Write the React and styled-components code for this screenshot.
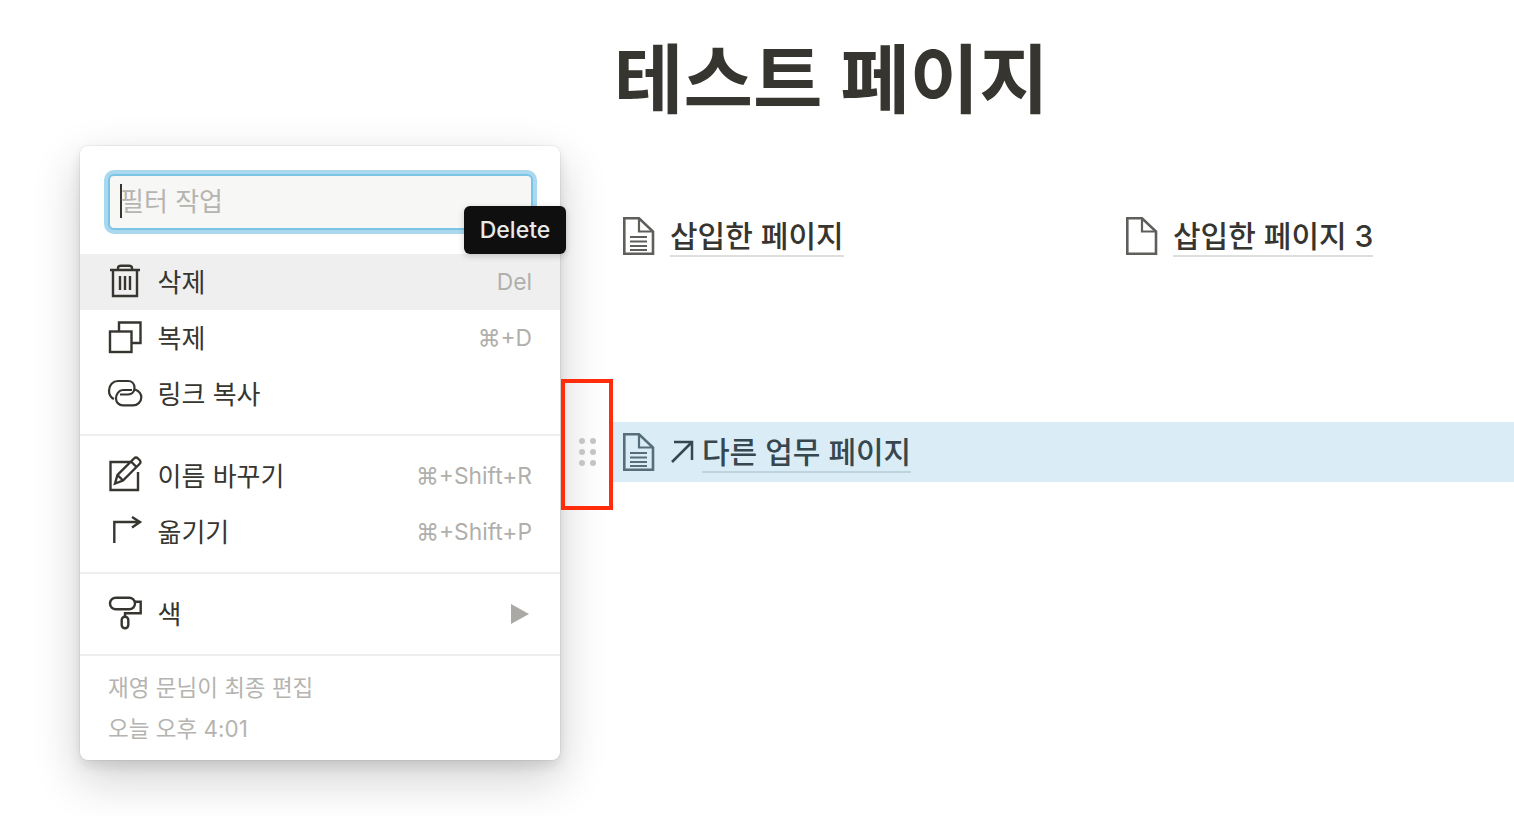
import styled, { createGlobalStyle } from "styled-components";

const Global = createGlobalStyle`
  html, body {
    margin: 0;
    padding: 0;
    background: #fff;
    font-family: Inter, "Noto Sans CJK KR", sans-serif;
  }
`;

const Page = styled.div`
  position: relative;
  width: 1514px;
  height: 816px;
  overflow: hidden;
  padding-left: 613px;
  box-sizing: border-box;
  background: #fff;
`;

const Title = styled.h1`
  margin: 0 0 52px;
  padding-left: 1px;
  height: 154px;
  line-height: 160px;
  font-size: 75.5px;
  font-weight: 700;
  color: #37352f;
  white-space: nowrap;
`;

const LinkGrid = styled.div`
  display: grid;
  grid-template-columns: 503px 1fr;
  margin-bottom: 156px;
`;

const Block = styled.div`
  display: flex;
  align-items: center;
  height: 60px;
  padding-left: 9px;
  background: ${(p) => (p.$selected ? "#daedf6" : "transparent")};
  color: ${(p) => (p.$selected ? "#37474f" : "#37352f")};
`;

const DocIcon = styled.svg`
  width: 33px;
  height: 40px;
  margin-right: 15px;
  flex: none;
  color: ${(p) => (p.$selected ? "#566e79" : "#5f5e5a")};
`;

const ArrowIcon = styled.svg`
  width: 26px;
  height: 26px;
  margin-right: 6px;
  flex: none;
`;

const LinkText = styled.span`
  font-size: 30px;
  line-height: 34px;
  padding: 4px 0 2px;
  font-weight: 500;
  white-space: nowrap;
  border-bottom: 2px solid ${(p) => (p.$selected ? "#bdd3de" : "#dededd")};
`;

const Menu = styled.div`
  position: absolute;
  left: 80px;
  top: 146px;
  width: 480px;
  height: 614px;
  box-sizing: border-box;
  padding-top: 28px;
  background: #fff;
  border-radius: 8px;
  box-shadow: 0 0 0 1px rgba(15, 15, 15, 0.05), 0 6px 12px rgba(15, 15, 15, 0.1),
    0 18px 48px rgba(15, 15, 15, 0.2);
`;

const FilterBox = styled.div`
  display: flex;
  align-items: center;
  box-sizing: border-box;
  height: 56px;
  margin: 0 27px 24px 28px;
  padding: 0 0 6px 10px;
  background: #f7f7f6;
  border: 2px solid #7cc4e6;
  border-radius: 6px;
  box-shadow: 0 0 0 4px #a9d8ef;
  font-size: 26px;
  color: #b5b4b0;
`;

const Caret = styled.span`
  width: 2px;
  height: 34px;
  margin: 4px -2px 0 0;
  background: #37352f;
  flex: none;
`;

const Tooltip = styled.div`
  position: absolute;
  left: 384px;
  top: 60px;
  width: 102px;
  height: 48px;
  display: flex;
  align-items: center;
  justify-content: center;
  background: #0f0f0f;
  color: #e9e9e8;
  border-radius: 6px;
  font-size: 23px;
  font-weight: 500;
  box-shadow: 0 2px 6px rgba(15, 15, 15, 0.2);
`;

const Row = styled.div`
  display: flex;
  align-items: center;
  height: 56px;
  padding: 0 28px;
  background: ${(p) => (p.$active ? "#efefef" : "transparent")};
  color: #37352f;
`;

const RowIcon = styled.svg`
  width: 36px;
  height: 36px;
  margin-right: 13.5px;
  flex: none;
  overflow: visible;
  color: #37352f;
`;

const RowLabel = styled.span`
  flex: 1;
  padding-bottom: 4px;
  font-size: 26px;
  white-space: nowrap;
`;

const Shortcut = styled.span`
  padding-bottom: 2px;
  font-size: 22.8px;
  color: #b0afac;
  white-space: nowrap;
`;

const Divider = styled.div`
  height: 2px;
  background: #eeeeee;
  margin: ${(p) => p.$top}px 0 ${(p) => p.$bottom}px;
`;

const Triangle = styled.span`
  width: 0;
  height: 0;
  margin-right: 3px;
  border-left: 18px solid #aaa9a6;
  border-top: 10px solid transparent;
  border-bottom: 10px solid transparent;
`;

const Footer = styled.div`
  padding-left: 28px;
  font-size: 22.5px;
  line-height: 41px;
  color: #b5b4b0;
  white-space: nowrap;
`;

const HandleFrame = styled.div`
  position: absolute;
  left: 561px;
  top: 379px;
  width: 52px;
  height: 131px;
  box-sizing: border-box;
  border: 4px solid #ff2d0a;
  display: flex;
  align-items: flex-start;
  justify-content: center;
  padding-top: 55px;
`;

const Dots = styled.div`
  display: grid;
  grid-template-columns: repeat(2, 6px);
  grid-auto-rows: 6px;
  gap: 5px;
`;

const Dot = styled.span`
  border-radius: 50%;
  background: #c4c4c2;
`;

const Doc = ({ lines, selected }) => (
  <DocIcon viewBox="0 0 33 40" fill="none" stroke="currentColor" strokeWidth="2.6" $selected={selected}>
    <path d="M2.3 2.3H17L31 15.5V37.7H2.3Z" />
    <path d="M17 2.3V15.5H31" strokeWidth="2.2" />
    {lines && <path d="M8 21H25M8 25.5H25M8 30H25M8 34H25" strokeWidth="2" />}
  </DocIcon>
);

const iconProps = { viewBox: "0 0 36 36", fill: "none", stroke: "currentColor", strokeWidth: 2.4 };

const TrashIcon = () => (
  <RowIcon {...iconProps}>
    <path d="M2 6H32M10 6V4Q10 1.7 13 1.7H21Q24 1.7 24 4V6M5 6V32H29V6" />
    <path d="M12 12V26M17 12V26M22 12V26" />
  </RowIcon>
);

const CopyIcon = () => (
  <RowIcon {...iconProps}>
    <rect x="2" y="11.5" width="21.5" height="20.5" />
    <path d="M11 11V2.5H32.5V23H24" />
  </RowIcon>
);

const LinkIcon = () => (
  <RowIcon {...iconProps} strokeWidth="2.2">
    <path d="M6 23C2.5 21.5 1 18 1 14.5C1 9 5 5 10 5H20C24 5 26.5 8 26.5 11.7C26.5 15.5 24 18.5 20 18.5H12" />
    <path d="M27 13.5C31 15 33.3 17.5 33.3 21.5C33.3 26 29.5 29.3 25 29.3H15C11 29.3 8 26.5 8 22.5C8 18 11 14 15 14H24" />
  </RowIcon>
);

const RenameIcon = () => (
  <RowIcon {...iconProps}>
    <path d="M30 14V32H2.5V4H22" />
    <path d="M7 25.5L9.5 17L26 0.5Q28 -1.5 30 0.5L31.5 2Q33.5 4 31.5 6L15 22.5Z" />
    <path d="M9.5 17L15 22.5M23 3.5L28.5 9" />
  </RowIcon>
);

const MoveIcon = () => (
  <RowIcon {...iconProps}>
    <path d="M6.3 29V8H32M24 3L32 8L24 13.5" />
  </RowIcon>
);

const RollerIcon = () => (
  <RowIcon {...iconProps}>
    <rect x="2" y="1.7" width="25" height="11.6" rx="5.8" />
    <path d="M27 5.7H32.7V17.3H17V20.7" />
    <rect x="13.7" y="20.7" width="6.6" height="11.6" rx="3.3" />
  </RowIcon>
);

export default function App() {
  return (
    <Page>
      <Global />
      <Title>테스트 페이지</Title>
      <LinkGrid>
        <Block>
          <Doc lines />
          <LinkText>삽입한 페이지</LinkText>
        </Block>
        <Block>
          <Doc />
          <LinkText>삽입한 페이지 3</LinkText>
        </Block>
      </LinkGrid>
      <Block $selected>
        <Doc lines selected />
        <ArrowIcon viewBox="0 0 26 26" fill="none" stroke="currentColor" strokeWidth="2.5">
          <path d="M2 23L22 3M4 3H22V21" />
        </ArrowIcon>
        <LinkText $selected>다른 업무 페이지</LinkText>
      </Block>

      <Menu>
        <FilterBox>
          <Caret />
          필터 작업
        </FilterBox>
        <Tooltip>Delete</Tooltip>
        <Row $active>
          <TrashIcon />
          <RowLabel>삭제</RowLabel>
          <Shortcut>Del</Shortcut>
        </Row>
        <Row>
          <CopyIcon />
          <RowLabel>복제</RowLabel>
          <Shortcut>⌘+D</Shortcut>
        </Row>
        <Row>
          <LinkIcon />
          <RowLabel>링크 복사</RowLabel>
        </Row>
        <Divider $top={12} $bottom={12} />
        <Row>
          <RenameIcon />
          <RowLabel>이름 바꾸기</RowLabel>
          <Shortcut>⌘+Shift+R</Shortcut>
        </Row>
        <Row>
          <MoveIcon />
          <RowLabel>옮기기</RowLabel>
          <Shortcut>⌘+Shift+P</Shortcut>
        </Row>
        <Divider $top={12} $bottom={12} />
        <Row>
          <RollerIcon />
          <RowLabel>색</RowLabel>
          <Triangle />
        </Row>
        <Divider $top={12} $bottom={11} />
        <Footer>
          재영 문님이 최종 편집
          <br />
          오늘 오후 4:01
        </Footer>
      </Menu>

      <HandleFrame>
        <Dots>
          {[0, 1, 2, 3, 4, 5].map((i) => (
            <Dot key={i} />
          ))}
        </Dots>
      </HandleFrame>
    </Page>
  );
}
